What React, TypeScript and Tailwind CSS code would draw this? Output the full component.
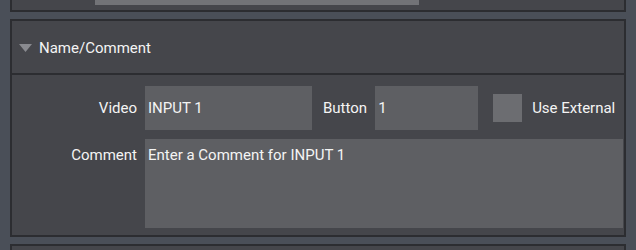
export default function App() {
  return (
    <div className="h-[250px] w-[636px] overflow-hidden bg-[#4a4f58] font-['Roboto',sans-serif] text-[15px] text-[#f4f4f4]">
      {/* previous panel, cut off at the top */}
      <div className="ml-[10px] h-[12px] w-[616px] border-x-2 border-b-2 border-[#2c2d31] bg-[#45464b]">
        <div className="ml-[83px] h-[5px] w-[324px] bg-[#727377]" />
      </div>

      <div className="ml-[10px] mt-[7px] w-[616px] border-2 border-[#2c2d31] bg-[#45464b]">
        <div className="flex h-[52px] items-center gap-[7px] pl-[7px] pt-[2px]">
          <svg width="13" height="8" viewBox="0 0 13 8">
            <path d="M0 0H13L6.5 8Z" fill="#898a8f" />
          </svg>
          <span className="leading-none">Name/Comment</span>
        </div>
        <div className="border-t-2 border-[#2c2d31] pb-[7px] pr-px pt-[11px]">
          <div className="flex h-[44px] items-center">
            <span className="w-[126px] pr-[1px] text-right">Video</span>
            <div className="ml-[7px] flex h-full w-[167px] items-center bg-[#5e5f63] pl-[3px]">INPUT 1</div>
            <span className="ml-[11px]">Button</span>
            <div className="ml-[8px] flex h-full w-[103px] items-center bg-[#5e5f63] pl-[3px]">1</div>
            <div className="ml-[15px] h-[28px] w-[29px] bg-[#6c6d71]" />
            <span className="ml-[10px]">Use External</span>
          </div>
          <div className="mt-[9px] flex">
            <span className="w-[126px] pr-[1px] pt-[5px] text-right">Comment</span>
            <div className="ml-[7px] h-[89px] flex-1 bg-[#5e5f63] pl-[3px] pt-[5px]">Enter a Comment for INPUT 1</div>
          </div>
        </div>
      </div>

      <div className="ml-[10px] mt-[7px] h-[20px] w-[616px] border-2 border-[#2c2d31] bg-[#45464b]" />
    </div>
  );
}
